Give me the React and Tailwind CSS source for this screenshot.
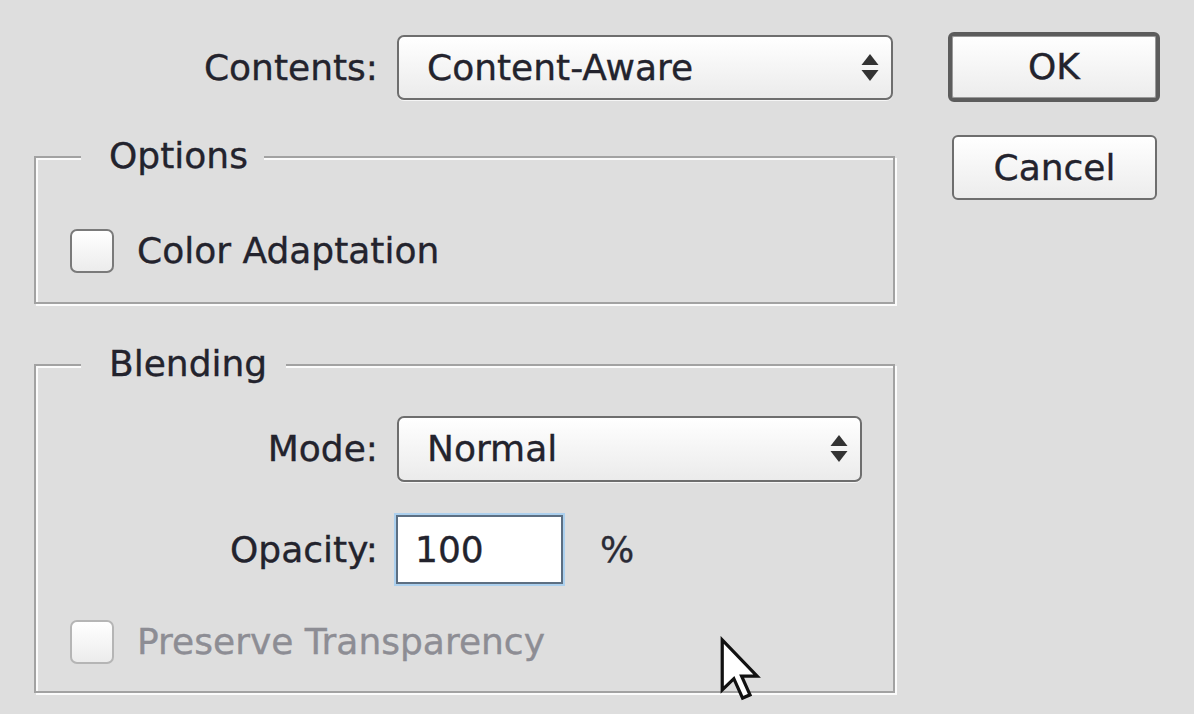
const font = { fontFamily: '"DejaVu Sans", Verdana, sans-serif' };

const Arrows = () => (
  <svg width="20" height="30" viewBox="0 0 20 30" className="shrink-0">
    <path d="M10 1 L18.5 12 L1.5 12 Z" fill="#333333" />
    <path d="M1.5 17 L18.5 17 L10 28 Z" fill="#333333" />
  </svg>
);

const Select = ({ value, className }) => (
  <div
    className={`flex items-center justify-between rounded-[7px] border-2 border-[#6e6e6e] bg-gradient-to-b from-white to-[#ebebeb] pl-[28px] pr-[11px] shadow-[0_1px_0_#f6f6f6] ${className}`}
  >
    <span className="text-[#23232d]">{value}</span>
    <Arrows />
  </div>
);

const Checkbox = ({ label, disabled }) => (
  <div className="flex items-center">
    <div
      className={`h-[44px] w-[44px] rounded-[7px] border-2 bg-gradient-to-b from-white to-[#ececec] ${
        disabled ? "border-[#b5b5b5] from-[#e4e4e4] to-[#e0e0e0]" : "border-[#7a7a7a]"
      }`}
    />
    <span className={`ml-[23px] ${disabled ? "text-[#8d8d94]" : "text-[#23232d]"}`}>{label}</span>
  </div>
);

const Group = ({ title, titleGap, className, children }) => (
  <div
    className={`relative w-[861px] border-2 border-[#a2a2a2] shadow-[inset_2px_2px_0_#fbfbfb,2px_2px_0_#fbfbfb] ${className}`}
  >
    <span
      className={`absolute left-[45px] top-[-22px] bg-[#dedede] pl-[28px] leading-[40px] text-[#23232d] ${titleGap}`}
    >
      {title}
    </span>
    {children}
  </div>
);

const Cursor = () => (
  <svg
    width="42"
    height="66"
    viewBox="0 0 13 20"
    className="absolute left-[719px] top-[636px]"
  >
    <path
      d="M1 1 L1 16.5 L4.6 13 L7.3 19 L9.6 18 L7 12.2 L11.8 12.2 Z"
      fill="#ffffff"
      stroke="#111111"
      strokeWidth="1"
      strokeLinejoin="miter"
    />
  </svg>
);

export default function App() {
  return (
    <div
      className="relative flex h-[714px] w-[1194px] overflow-hidden bg-[#dedede] text-[36px] leading-none [-webkit-text-stroke:0.35px_currentColor]"
      style={font}
    >
      <div className="ml-[34px] flex w-[861px] flex-col">
        <div className="mt-[35px] flex items-center">
          <span className="w-[344px] text-right text-[#23232d]">Contents:</span>
          <Select value="Content-Aware" className="ml-[19px] h-[65px] w-[496px]" />
        </div>

        <Group title="Options" titleGap="pr-[16px]" className="mt-[56px] h-[148px]">
          <div className="ml-[34px] mt-[71px]">
            <Checkbox label="Color Adaptation" />
          </div>
        </Group>

        <Group title="Blending" titleGap="pr-[19px]" className="mt-[60px] h-[329px]">
          <div className="mt-[50px] flex items-center">
            <span className="w-[342px] text-right text-[#23232d]">Mode:</span>
            <Select value="Normal" className="ml-[19px] h-[66px] w-[465px]" />
          </div>
          <div className="mt-[33px] flex items-center">
            <span className="w-[342px] text-right text-[#23232d]">Opacity:</span>
            <div className="ml-[18px] flex h-[69px] w-[167px] items-center border-2 border-[#5d6f82] bg-white pl-[17px] text-[#23232d] shadow-[0_0_0_2px_#acd0ee]">
              100
            </div>
            <span className="ml-[37px] text-[#2a2a35]">%</span>
          </div>
          <div className="ml-[34px] mt-[36px]">
            <Checkbox label="Preserve Transparency" disabled />
          </div>
        </Group>
      </div>

      <div className="ml-[53px] mt-[32px] flex flex-col">
        <button className="flex h-[70px] w-[212px] items-center justify-center rounded-[6px] border-[4px] border-[#5c5c5c] bg-gradient-to-b from-white to-[#ececec] text-[#23232d] shadow-[inset_0_0_0_1px_#9a9a9a]">
          OK
        </button>
        <button className="ml-[4px] mt-[33px] flex h-[65px] w-[205px] items-center justify-center rounded-[6px] border-2 border-[#6e6e6e] bg-gradient-to-b from-white to-[#ececec] text-[#23232d]">
          Cancel
        </button>
      </div>

      <Cursor />
    </div>
  );
}
